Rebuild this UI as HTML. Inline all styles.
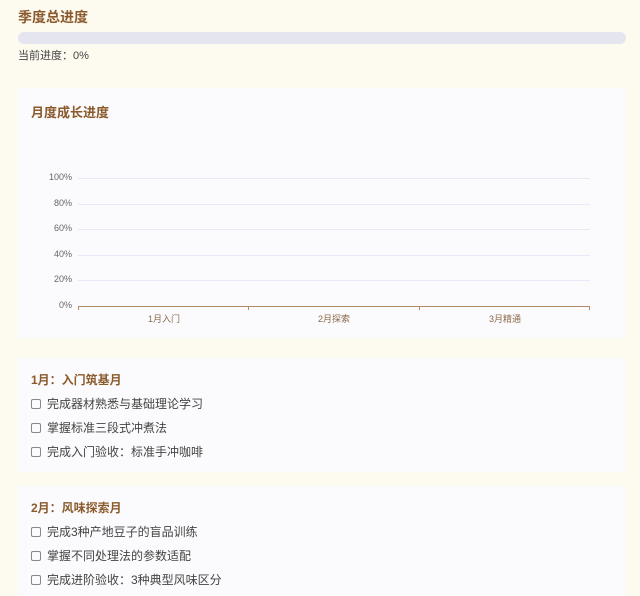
<!DOCTYPE html>
<html><head><meta charset="utf-8"><style>
body{margin:0;width:640px;height:591px;overflow:hidden;background:#fdfaf0;font-family:"Liberation Sans","Noto Sans CJK SC",sans-serif;position:relative}
.a{position:absolute;white-space:nowrap}
.h{color:#8b5a2b;font-weight:bold}
.card{position:absolute;left:18px;width:608px;background:#fbfbfd}
.it{position:absolute;left:31px;font-size:12px;color:#444;white-space:nowrap}
.it:before{content:"";display:inline-block;width:8px;height:8px;border:1px solid #888;border-radius:2px;margin-right:6px;vertical-align:-1px}
.yl{position:absolute;right:568px;font-size:9px;color:#666}
.g{position:absolute;left:78px;width:512px;height:1px;background:#e8e8f6}
</style></head><body>
<div class="a h" style="left:18px;top:7px;font-size:14px">季度总进度</div>
<div class="a" style="left:18px;top:32px;width:608px;height:12px;border-radius:6px;background:#e4e5ef"></div>
<div class="a" style="left:18px;top:47px;font-size:11px;color:#444">当前进度：0%</div>
<div class="card" style="top:88px;height:250px"></div>
<div class="a h" style="left:31px;top:102px;font-size:13px">月度成长进度</div>
<div class="g" style="top:178px"></div><div class="g" style="top:204px"></div><div class="g" style="top:229px"></div><div class="g" style="top:255px"></div><div class="g" style="top:280px"></div>
<div class="yl" style="top:172px">100%</div><div class="yl" style="top:198px">80%</div><div class="yl" style="top:223px">60%</div><div class="yl" style="top:249px">40%</div><div class="yl" style="top:274px">20%</div><div class="yl" style="top:300px">0%</div>
<div class="a" style="left:78px;top:306px;width:512px;height:1px;background:#b08a66"></div>
<div class="a" style="left:78px;top:306px;width:1px;height:4px;background:#b08a66"></div>
<div class="a" style="left:248px;top:306px;width:1px;height:4px;background:#b08a66"></div>
<div class="a" style="left:419px;top:306px;width:1px;height:4px;background:#b08a66"></div>
<div class="a" style="left:589px;top:306px;width:1px;height:4px;background:#b08a66"></div>
<div class="a" style="left:148px;top:312px;font-size:9px;color:#8b6a4b">1月入门</div>
<div class="a" style="left:318px;top:312px;font-size:9px;color:#8b6a4b">2月探索</div>
<div class="a" style="left:489px;top:312px;font-size:9px;color:#8b6a4b">3月精通</div>
<div class="card" style="top:358px;height:114px"></div>
<div class="a h" style="left:31px;top:371px;font-size:12px">1月：入门筑基月</div>
<div class="it" style="top:395px">完成器材熟悉与基础理论学习</div>
<div class="it" style="top:419px">掌握标准三段式冲煮法</div>
<div class="it" style="top:443px">完成入门验收：标准手冲咖啡</div>
<div class="card" style="top:486px;height:110px"></div>
<div class="a h" style="left:31px;top:499px;font-size:12px">2月：风味探索月</div>
<div class="it" style="top:523px">完成3种产地豆子的盲品训练</div>
<div class="it" style="top:547px">掌握不同处理法的参数适配</div>
<div class="it" style="top:571px">完成进阶验收：3种典型风味区分</div>
</body></html>
